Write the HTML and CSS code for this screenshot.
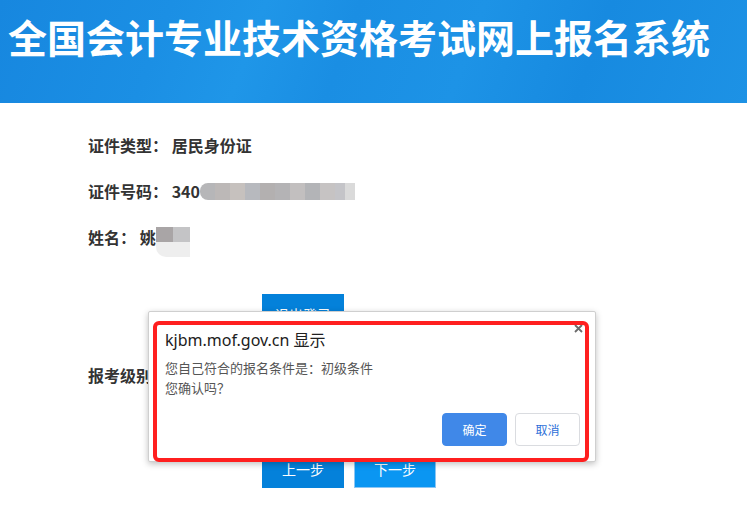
FILE: index.html
```html
<!DOCTYPE html>
<html lang="zh-CN">
<head>
    <meta charset="UTF-8">
    <meta name="viewport" content="width=device-width, initial-scale=1.0">
    <title>全国会计专业技术资格考试网上报名系统</title>
    <link rel="stylesheet" href="styles.css">
</head>
<body>
    <div class="header">
        <h1>全国会计专业技术资格考试网上报名系统</h1>
    </div>
    <div class="container">
        <div class="info-row">证件类型： 居民身份证</div>
        <div class="info-row">证件号码： 340<span class="mask mask-id"></span></div>
        <div class="info-row">姓名： 姚<span class="mask mask-name"></span></div>
        <div class="btn-row logout-row">
            <button class="btn btn-dark">退出登录</button>
        </div>
        <div class="info-row level-row">报考级别：</div>
        <div class="btn-row step-row">
            <button class="btn btn-dark">上一步</button>
            <button class="btn btn-light">下一步</button>
        </div>
    </div>

    <div class="dialog">
        <span class="dialog-close">
            <svg width="9" height="9" viewBox="0 0 9 9"><path d="M1 1L8 8M8 1L1 8" stroke="#6b6b6b" stroke-width="1.8"/></svg>
        </span>
        <div class="dialog-title">kjbm.mof.gov.cn 显示</div>
        <div class="dialog-msg">您自己符合的报名条件是：初级条件<br>您确认吗？</div>
        <div class="dialog-actions">
            <button class="dlg-btn dlg-ok">确定</button>
            <button class="dlg-btn dlg-cancel">取消</button>
        </div>
    </div>
    <div class="highlight"></div>
</body>
</html>
```
FILE: styles.css
```css
body {
    margin: 0;
    padding: 0;
    background: #ffffff;
    color: #333;
    font-family: "Noto Sans CJK SC", "Noto Sans", sans-serif;
}
.header {
    height: 103px;
    box-sizing: border-box;
    padding: 12px 0 0 8px;
    background: linear-gradient(110deg, #1787df 0%, #1b8fe4 22%, #1f96e8 34%, #1a8ee3 46%, #1d93e6 62%, #178ae0 78%, #1d92e5 100%);
}
.header h1 {
    margin: 0;
    color: #fff;
    font-size: 39px;
    line-height: 48px;
    font-weight: bold;
    white-space: nowrap;
}
.container {
    display: flex;
    flex-direction: column;
    padding: 32px 0 0 88px;
}
.info-row {
    height: 20px;
    font-size: 16px;
    line-height: 20px;
    font-weight: bold;
    color: #333;
    margin-bottom: 26px;
    display: flex;
    align-items: center;
}
.mask {
    display: inline-block;
}
.mask-id {
    width: 155px;
    height: 17px;
    border-radius: 8px 0 0 8px;
    background: linear-gradient(to right,
        #b6b6b8 0 15px, #bcb8b7 15px 30px, #c6c1be 30px 45px, #b7b9be 45px 60px,
        #b3b0b0 60px 75px, #b4b3b5 75px 90px, #c2bfbf 90px 105px, #b3b4b7 105px 120px,
        #c6c3c3 120px 135px, #c4c4c8 135px 145px, #dadada 145px 155px);
}
.mask-name {
    align-self: flex-start;
    width: 34px;
    height: 30px;
    border-radius: 0 0 0 10px;
    background:
        linear-gradient(to right, #a9a5a6 0 17px, #c4c4c6 17px 34px) top / 100% 15px no-repeat,
        #eeeeee;
}
.btn-row {
    display: flex;
    gap: 10px;
    padding-left: 174px;
}
.logout-row {
    margin-top: 21px;
    margin-bottom: 32px;
}
.level-row {
    margin-bottom: 0;
}
.step-row {
    margin-top: 64px;
}
.btn {
    width: 82px;
    height: 39px;
    border: none;
    color: #fff;
    font-family: "Noto Sans CJK SC", sans-serif;
    font-size: 14px;
    cursor: pointer;
}
.btn-dark {
    background: #0481da;
}
.btn-light {
    background: #0a96f2;
    border: 1px solid #8cc6f3;
}
.dialog {
    position: absolute;
    left: 148px;
    top: 311px;
    width: 448px;
    height: 151px;
    box-sizing: border-box;
    background: #fff;
    border: 1px solid #cfcfcf;
    border-radius: 2px;
    box-shadow: 0 2px 6px rgba(0, 0, 0, 0.25);
    padding: 18px 15px 0 16px;
}
.dialog-close {
    position: absolute;
    right: 12px;
    top: 12px;
    line-height: 0;
}
.dialog-title {
    font-family: "Noto Sans", "Noto Sans CJK SC", sans-serif;
    font-size: 16px;
    line-height: 20px;
    color: #202020;
}
.dialog-msg {
    margin-top: 8px;
    font-size: 13px;
    line-height: 20px;
    color: #555;
}
.dialog-actions {
    display: flex;
    justify-content: flex-end;
    gap: 8px;
    margin-top: 15px;
}
.dlg-btn {
    width: 65px;
    height: 33px;
    border-radius: 4px;
    font-family: "Noto Sans CJK SC", sans-serif;
    font-size: 12px;
    cursor: pointer;
}
.dlg-ok {
    background: #4088e8;
    border: 1px solid #4088e8;
    color: #fff;
}
.dlg-cancel {
    background: #fff;
    border: 1px solid #dadce0;
    color: #2d6fd8;
}
.highlight {
    position: absolute;
    left: 153px;
    top: 321px;
    width: 436px;
    height: 141px;
    box-sizing: border-box;
    border: 4px solid #ff1f1f;
    border-radius: 6px;
}
```
